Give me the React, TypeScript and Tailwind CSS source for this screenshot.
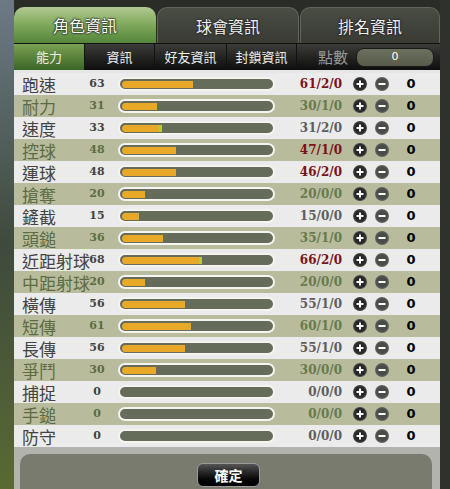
const cjk = "font-['Noto_Sans_CJK_TC','Noto_Sans_CJK_SC',sans-serif]";
const serifNum = "font-['DejaVu_Serif',serif] font-bold";

type Stat = {
  name: string;
  value: number;
  detail: string;
  tone: "red" | "olive" | "gray";
  tip?: boolean;
};

const stats: Stat[] = [
  { name: "跑速", value: 63, detail: "61/2/0", tone: "red" },
  { name: "耐力", value: 31, detail: "30/1/0", tone: "olive" },
  { name: "速度", value: 33, detail: "31/2/0", tone: "gray", tip: true },
  { name: "控球", value: 48, detail: "47/1/0", tone: "red" },
  { name: "運球", value: 48, detail: "46/2/0", tone: "red" },
  { name: "搶奪", value: 20, detail: "20/0/0", tone: "olive" },
  { name: "鏟截", value: 15, detail: "15/0/0", tone: "gray" },
  { name: "頭鎚", value: 36, detail: "35/1/0", tone: "olive" },
  { name: "近距射球", value: 68, detail: "66/2/0", tone: "red", tip: true },
  { name: "中距射球", value: 20, detail: "20/0/0", tone: "olive" },
  { name: "橫傳", value: 56, detail: "55/1/0", tone: "gray" },
  { name: "短傳", value: 61, detail: "60/1/0", tone: "olive" },
  { name: "長傳", value: 56, detail: "55/1/0", tone: "gray" },
  { name: "爭鬥", value: 30, detail: "30/0/0", tone: "olive" },
  { name: "捕捉", value: 0, detail: "0/0/0", tone: "gray" },
  { name: "手鎚", value: 0, detail: "0/0/0", tone: "olive" },
  { name: "防守", value: 0, detail: "0/0/0", tone: "gray" },
];

const toneClass = {
  red: "text-[#7c1216]",
  olive: "text-[#677a4c]",
  gray: "text-[#5e5e5e]",
};

const outline = "[text-shadow:0_0_2px_#222,0_0_2px_#222,0_0_1px_#000]";

const RoundButton = ({ minus }: { minus?: boolean }) => (
  <div
    className={`w-[14px] h-[14px] rounded-full flex items-center justify-center shrink-0 ${
      minus
        ? "bg-[radial-gradient(circle,#4a4c48_50%,#8c8c88_100%)]"
        : "bg-[radial-gradient(circle,#262626_50%,#848482_100%)]"
    }`}
  >
    <svg width="8" height="8" viewBox="0 0 8 8">
      <rect x="0.5" y="3" width="7" height="2" fill="#fff" />
      {!minus && <rect x="3" y="0.5" width="2" height="7" fill="#fff" />}
    </svg>
  </div>
);

const Row = ({ s, i }: { s: Stat; i: number }) => {
  const green = i % 2 === 1;
  const labelColor = green ? "text-[#5b6c43]" : "text-[#434343]";
  const fill = Math.round(s.value * 1.13);
  return (
    <div
      className={`h-[22px] flex items-center pl-[8px] ${
        green ? "bg-[#b8bc9d]" : "bg-[#ebebeb]"
      }`}
    >
      <span className={`${cjk} ${labelColor} text-[17px] leading-none w-[64px] shrink-0 whitespace-nowrap`}>
        {s.name}
      </span>
      <span className={`${serifNum} ${labelColor} text-[11px] w-[22px] text-center shrink-0`}>
        {s.value}
      </span>
      <div className="ml-[10px] w-[157px] h-[14px] rounded-full border-2 border-[#f4f4f0] bg-[#666c5a] flex items-center pl-[2px] shrink-0">
        {s.value > 0 && (
          <div className="flex h-[7px] rounded-l-full overflow-hidden">
            <div className="bg-[#e8a828] h-full" style={{ width: fill }} />
            {s.tip && <div className="bg-[#b4cc3c] h-full w-[3px]" />}
          </div>
        )}
      </div>
      <span className={`${serifNum} ${toneClass[s.tone]} text-[12px] w-[67px] text-right shrink-0`}>
        {s.detail}
      </span>
      <div className="ml-[11px]">
        <RoundButton />
      </div>
      <div className="ml-[8px]">
        <RoundButton minus />
      </div>
      <span className="font-['DejaVu_Sans',sans-serif] font-bold text-[13px] text-black w-[44px] text-center shrink-0">
        0
      </span>
    </div>
  );
};

const App = () => {
  return (
    <div className="w-[450px] h-[489px] overflow-hidden flex bg-[#2d2f2b]">
      <div className="w-[14px] shrink-0 bg-gradient-to-b from-[#6d7a86] via-[#3e4a3c] to-[#5a6a32]" />
      <div className="w-[426px] shrink-0 flex flex-col">
        <div className="h-[7px] bg-[#2a2c28]" />
        <div className="h-[36px] flex bg-[#2a2c28]">
          <div className={`w-[142px] rounded-t-[10px] bg-gradient-to-b from-[#b3ca92] via-[#7ea85a] to-[#54853a] flex items-center justify-center ${cjk} text-[16px] text-white ${outline}`}>
            角色資訊
          </div>
          <div className={`w-[142px] ml-[1px] rounded-t-[10px] border border-b-0 border-[#62665a] bg-gradient-to-b from-[#4a4d44] to-[#393b34] flex items-center justify-center ${cjk} text-[16px] text-[#f2f2f2] ${outline}`}>
            球會資訊
          </div>
          <div className={`flex-1 ml-[1px] rounded-t-[10px] border border-b-0 border-[#62665a] bg-gradient-to-b from-[#4a4d44] to-[#393b34] flex items-center justify-center ${cjk} text-[16px] text-[#f2f2f2] ${outline}`}>
            排名資訊
          </div>
        </div>
        <div className={`h-[27px] flex border-t border-[#111] bg-gradient-to-b from-[#3c3c3a] to-[#0e0e0e] ${cjk} text-[13px] text-[#eeeeee]`}>
          <div className="w-[71px] flex items-center justify-center bg-gradient-to-b from-[#7aa253] to-[#3a6626] border-r border-[#111]">
            能力
          </div>
          <div className="w-[70px] flex items-center justify-center border-r border-[#111]">資訊</div>
          <div className="w-[72px] flex items-center justify-center border-r border-[#111]">好友資訊</div>
          <div className="w-[70px] flex items-center justify-center border-r border-[#111]">封鎖資訊</div>
          <div className="flex-1 flex items-center pl-[21px]">
            <span className="text-[15px] text-[#9a9a96]">點數</span>
            <div className="ml-[8px] w-[78px] h-[19px] rounded-[8px] border border-[#1a1a1a] bg-gradient-to-b from-[#6c705e] to-[#575b4b] flex items-center justify-center font-['DejaVu_Sans',sans-serif] text-[11px] text-white">
              0
            </div>
          </div>
        </div>
        <div className="flex-1 bg-[#b3b3ad] flex flex-col">
          <div className="h-[3px] bg-[#e6e6e6]" />
          {stats.map((s, i) => (
            <Row key={s.name} s={s} i={i} />
          ))}
          <div className="h-[7px]" />
          <div className="flex-1 ml-[6px] mr-[8px] rounded-t-[10px] bg-[#7a7b6f] flex justify-center pt-[9px] pl-[5px]">
            <div className={`w-[63px] h-[24px] rounded-[6px] border border-[#9a9a9a] bg-gradient-to-b from-[#555] via-[#1a1a1a] to-[#000] flex items-center justify-center ${cjk} text-[14px] font-bold text-white`}>
              確定
            </div>
          </div>
        </div>
      </div>
      <div className="flex-1 bg-[#2e312c]" />
    </div>
  );
};

export default App;
